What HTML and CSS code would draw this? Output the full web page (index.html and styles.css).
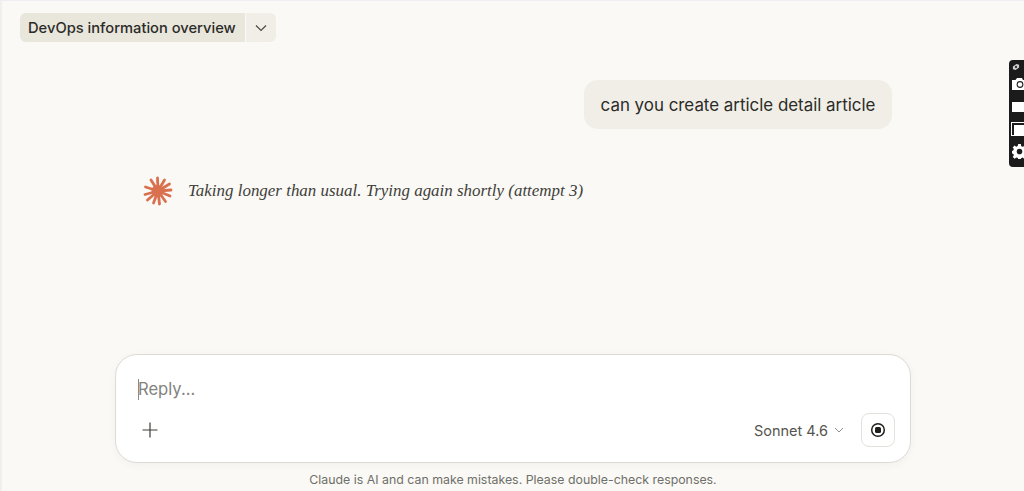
FILE: index.html
```html
<!DOCTYPE html>
<html lang="en">
<head>
    <meta charset="UTF-8">
    <title>DevOps information overview</title>
    <link rel="stylesheet" href="styles.css">
</head>
<body>

<div class="page">
    <header class="top-bar">
        <div class="chat-title">DevOps information overview</div>
        <button class="title-menu">
            <svg width="12" height="12" viewBox="0 0 12 12"><path d="M1 3.5 L6 8.5 L11 3.5" fill="none" stroke="#4a4a45" stroke-width="1.2"/></svg>
        </button>
    </header>

    <main class="thread">
        <div class="user-row">
            <div class="user-bubble">can you create article detail article</div>
        </div>
        <div class="status-row">
            <svg class="spark" width="30" height="30" viewBox="0 0 30 30">
                <circle cx="14.5" cy="15" r="6" fill="#d9714f"/>
                <g stroke="#d9714f" stroke-width="2.8" stroke-linecap="round">
                    <path d="M15 15 L14.5 2"/>
                    <path d="M15 15 L21.5 4"/>
                    <path d="M15 15 L26.5 8"/>
                    <path d="M15 15 L28 14"/>
                    <path d="M15 15 L27 20"/>
                    <path d="M15 15 L22.5 25.5"/>
                    <path d="M15 15 L16.5 28"/>
                    <path d="M15 15 L10.5 27"/>
                    <path d="M15 15 L4.5 24"/>
                    <path d="M15 15 L2 18.5"/>
                    <path d="M15 15 L2.5 11"/>
                    <path d="M15 15 L8 4"/>
                </g>
            </svg>
            <span class="status-text">Taking longer than usual. Trying again shortly (attempt 3)</span>
        </div>
    </main>

    <section class="composer">
        <div class="reply-line"><span class="caret"></span><span class="placeholder">Reply...</span></div>
        <div class="composer-tools">
            <button class="plain-btn">
                <svg width="16" height="16" viewBox="0 0 16 16"><path d="M8 0.5 V15.5 M0.5 8 H15.5" stroke="#3d3d3a" stroke-width="1.2" fill="none"/></svg>
            </button>
            <div class="tools-right">
                <span class="model-name">Sonnet 4.6</span>
                <svg class="model-arrow" width="10" height="10" viewBox="0 0 10 10"><path d="M1 3 L5 7 L9 3" fill="none" stroke="#8f8f8a" stroke-width="1"/></svg>
                <button class="stop-btn">
                    <svg width="16" height="16" viewBox="0 0 16 16"><circle cx="8" cy="8" r="6.3" fill="none" stroke="#1f1f1d" stroke-width="1.5"/><rect x="5" y="5" width="6" height="6" rx="1.5" fill="#1f1f1d"/></svg>
                </button>
            </div>
        </div>
    </section>

    <p class="disclaimer">Claude is AI and can make mistakes. Please double-check responses.</p>
</div>

<!-- floating capture toolbar, cut off by the window edge -->
<div class="capture-bar">
    <svg class="cap-logo" width="8" height="8" viewBox="0 0 9 9"><path d="M1 4 L5 1 L8 2 L8 5 L4 8 L1 7 Z" fill="#cfcfcf"/><circle cx="4.5" cy="4.5" r="1.3" fill="#333"/></svg>
    <svg class="cap-camera" width="15" height="12" viewBox="0 0 15 12"><path d="M0 2 H3.5 L5 0 H10 L11 2 H15 V12 H0 Z" fill="#fff"/><circle cx="8" cy="6.5" r="3.4" fill="#222"/><circle cx="8" cy="6.5" r="2.3" fill="#fff"/></svg>
    <div class="cap-rect"></div>
    <div class="cap-window"></div>
    <svg class="cap-gear" width="15" height="15" viewBox="0 0 16 16"><path d="M6.6 0 H9.4 L9.9 2.3 L11.6 3 L13.6 1.8 L15.4 3.8 L14 5.6 L14.8 7.2 L16 7.6 V10 L14.6 10.6 L14 12.2 L15 14 L13 15.6 L11.3 14.5 L9.7 15.2 L9.4 16 H6.6 L6.2 14.9 L4.6 14.3 L2.8 15.6 L0.8 13.8 L2 12 L1.3 10.5 L0 10 V7.4 L1.3 6.8 L2 5.3 L0.8 3.6 L2.7 1.7 L4.5 2.9 L6.1 2.2 Z M8 5 A3 3 0 1 0 8 11 A3 3 0 1 0 8 5 Z" fill="#fff" fill-rule="evenodd"/></svg>
</div>

</body>
</html>
```

FILE: styles.css
```css
* { box-sizing: border-box; }

body {
    margin: 0;
    height: 491px;
    overflow: hidden;
    background-color: #faf9f5;
    font-family: "Inter", "Liberation Sans", sans-serif;
    color: #2b2b28;
}

button {
    border: none;
    background: none;
    padding: 0;
    display: flex;
    align-items: center;
    justify-content: center;
}

.page {
    height: 491px;
    display: flex;
    flex-direction: column;
    border-top: 1px solid #eeeef4;
    border-left: 2px solid #f1f0ec;
}

/* title row */
.top-bar {
    display: flex;
    gap: 1px;
    padding: 12px 0 0 18px;
}

.chat-title {
    width: 225px;
    height: 29px;
    line-height: 31px;
    padding-left: 8px;
    font-size: 14.7px;
    font-weight: 500;
    white-space: nowrap;
    background-color: #e9e6dc;
    border-radius: 6px 0 0 6px;
}

.title-menu {
    width: 30px;
    height: 29px;
    background-color: #f0eee6;
    border-radius: 0 6px 6px 0;
}

/* conversation */
.thread {
    flex: 1;
    padding-top: 38px;
}

.user-row {
    display: flex;
    justify-content: flex-end;
    padding-right: 132px;
}

.user-bubble {
    width: 308px;
    height: 49px;
    line-height: 50px;
    text-align: center;
    font-size: 16.9px;
    white-space: nowrap;
    background-color: #f0eee6;
    border-radius: 14px;
}

.status-row {
    display: flex;
    align-items: center;
    gap: 15px;
    margin: 47px 0 0 141px;
}

.status-text {
    font-family: "Liberation Serif", serif;
    font-style: italic;
    font-size: 16.95px;
    color: #3f3f3b;
    white-space: nowrap;
}

/* reply box */
.composer {
    width: 796px;
    height: 109px;
    margin-left: 113px;
    padding: 23px 15px 15px 22px;
    background-color: #fff;
    border: 1px solid #dcdbd5;
    border-radius: 22px;
    box-shadow: 0 2px 10px rgba(0, 0, 0, 0.04);
}

.reply-line {
    display: flex;
    align-items: center;
    height: 22px;
    font-size: 16.6px;
}

.caret {
    width: 1px;
    height: 21px;
    margin-right: -1px;
    background-color: #8c8c86;
}

.placeholder {
    color: #83837d;
}

.composer-tools {
    display: flex;
    align-items: center;
    justify-content: space-between;
    margin-top: 13px;
}

.plain-btn {
    width: 16px;
    height: 16px;
    margin-left: 4px;
}

.tools-right {
    display: flex;
    align-items: center;
}

.model-name {
    font-size: 14.5px;
    color: #55554f;
}

.model-arrow {
    margin: 0 17px 0 6px;
}

.stop-btn {
    width: 34px;
    height: 34px;
    background-color: #fff;
    border: 1px solid #e2e1db;
    border-radius: 8px;
}

.disclaimer {
    margin: 9px 0 4px;
    text-align: center;
    font-size: 12.35px;
    color: #6f6f69;
}

/* capture toolbar sitting over the page at the right edge */
.capture-bar {
    position: absolute;
    top: 60px;
    left: 1009px;
    width: 24px;
    height: 107px;
    padding: 3px 0 0 3px;
    display: flex;
    flex-direction: column;
    background-color: #1b1b1b;
    border-radius: 4px;
}

.cap-camera { margin-top: 7px; }

.cap-rect {
    width: 16px;
    height: 10px;
    margin-top: 12px;
    background-color: #fff;
}

.cap-window {
    width: 16px;
    height: 12px;
    margin-top: 11px;
    background-color: #fff;
    border-top: 2px solid #1b1b1b;
    border-left: 2px solid #1b1b1b;
    outline: 1px solid #fff;
    outline-offset: 0;
}

.cap-gear { margin-top: 9px; }
```
